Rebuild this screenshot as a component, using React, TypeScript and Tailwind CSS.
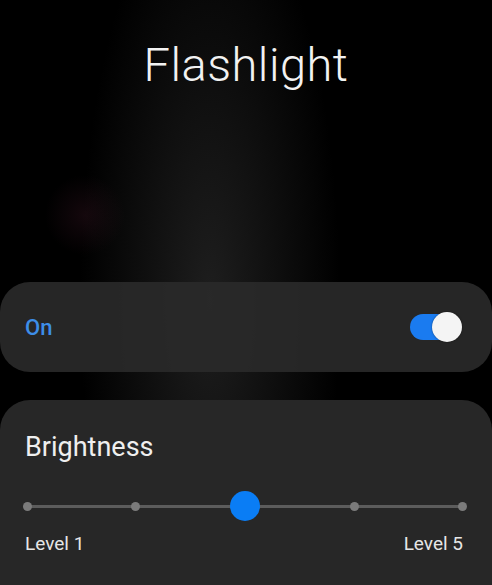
export default function App() {
  const levels = [1, 2, 3, 4, 5];
  const current = 3;

  return (
    <div
      className="relative h-[585px] w-[492px] overflow-hidden bg-black text-white"
      style={{ fontFamily: "Roboto, 'Noto Sans', sans-serif" }}
    >
      {/* soft blurred glow behind the panels */}
      <div className="pointer-events-none absolute inset-0 bg-[radial-gradient(ellipse_130px_420px_at_210px_300px,rgba(75,75,75,0.4),transparent)]" />
      <div className="pointer-events-none absolute inset-0 bg-[radial-gradient(circle_40px_at_85px_215px,rgba(80,30,50,0.25),transparent)]" />

      <div className="relative flex h-full flex-col">
        <h1 className="pt-[37px] text-center text-[47px] font-light leading-[55px] tracking-[0.5px] text-[#f2f2f2]">
          Flashlight
        </h1>

        <div className="mt-[190px] flex h-[90px] items-center justify-between rounded-[30px] bg-[#2a2a2a]/90 pl-[25px] pr-[31px]">
          <span className="text-[22px] font-medium text-[#3d8ee8]">On</span>
          <div className="relative h-[26px] w-[51px] rounded-full bg-[#1a7bf0]">
            <div className="absolute right-[-1px] top-[-2px] h-[30px] w-[30px] rounded-full bg-[#f4f4f4] shadow-[0_0_2px_rgba(0,0,0,0.5)]" />
          </div>
        </div>

        <div className="mt-[28px] flex-1 rounded-t-[30px] bg-[#272727] px-[25px] pt-[30px]">
          <div className="text-[27px] leading-[34px] text-[#efefef]">Brightness</div>

          <div className="relative ml-[2px] mr-[4px] mt-[27px] h-[30px]">
            <div className="absolute left-0 right-0 top-[14px] h-[3px] rounded-full bg-[#5c5c5c]" />
            <div className="absolute inset-0 flex items-center justify-between">
              {levels.map((l) =>
                l === current ? (
                  <div key={l} className="h-[30px] w-[30px] -mx-[13px] rounded-full bg-[#0a7df5]" />
                ) : (
                  <div key={l} className="h-[9px] w-[9px] -mx-[4px] rounded-full bg-[#7b7b7b]" />
                ),
              )}
            </div>
          </div>

          <div className="mr-[4px] mt-[11px] flex justify-between text-[19px] leading-[24px] text-[#e6e6e6]">
            <span>Level 1</span>
            <span>Level 5</span>
          </div>
        </div>
      </div>
    </div>
  );
}
